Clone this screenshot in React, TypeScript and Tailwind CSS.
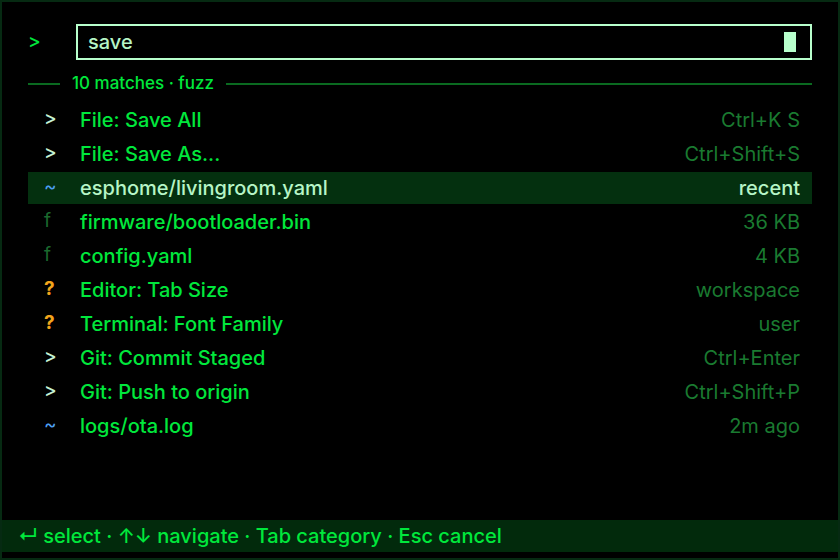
type Kind = "cmd" | "file" | "recent" | "setting";

type Item = {
  kind: Kind;
  label: string;
  hint: string;
  active?: boolean;
};

const items: Item[] = [
  { kind: "cmd", label: "File: Save All", hint: "Ctrl+K S" },
  { kind: "cmd", label: "File: Save As...", hint: "Ctrl+Shift+S" },
  { kind: "recent", label: "esphome/livingroom.yaml", hint: "recent", active: true },
  { kind: "file", label: "firmware/bootloader.bin", hint: "36 KB" },
  { kind: "file", label: "config.yaml", hint: "4 KB" },
  { kind: "setting", label: "Editor: Tab Size", hint: "workspace" },
  { kind: "setting", label: "Terminal: Font Family", hint: "user" },
  { kind: "cmd", label: "Git: Commit Staged", hint: "Ctrl+Enter" },
  { kind: "cmd", label: "Git: Push to origin", hint: "Ctrl+Shift+P" },
  { kind: "recent", label: "logs/ota.log", hint: "2m ago" },
];

function KindGlyph({ kind }: { kind: Kind }) {
  if (kind === "cmd") return <span className="text-[#c6f2d4]">&gt;</span>;
  if (kind === "file") return <span className="font-normal text-[#1b6a2e]">f</span>;
  if (kind === "recent") return <span className="font-normal text-[#4d9ff0]">~</span>;
  return <span className="font-bold text-[#f2a51c]">?</span>;
}

function Row({ item }: { item: Item }) {
  return (
    <div
      className={`flex h-[32px] items-center pl-[16px] pr-3 ${
        item.active ? "bg-[#04300f]" : ""
      }`}
    >
      <div className="w-[36px] shrink-0 text-[19px]">
        <KindGlyph kind={item.kind} />
      </div>
      <div className={`min-w-0 flex-1 ${item.active ? "text-[#b6f5c6]" : "text-[#00e83c]"}`}>
        {item.label}
      </div>
      <div className={item.active ? "text-[#b6f5c6]" : "font-normal text-[#1a7a30]"}>
        {item.hint}
      </div>
    </div>
  );
}

export default function App() {
  return (
    <div
      className="flex h-[560px] w-[840px] flex-col border-2 border-[#062a12] bg-black pb-[6px] text-[20px] font-medium leading-normal"
      style={{ fontFamily: "Inter, 'Noto Sans', sans-serif" }}
    >
      <div className="flex items-center px-[26px] pt-[22px]">
        <div className="w-[48px] shrink-0 text-[19px] text-[#00e83c]">&gt;</div>
        <div className="flex h-[36px] flex-1 items-center justify-between border-2 border-[#b8ffcc] pl-[10px] pr-[14px]">
          <span className="text-[#b6f5c6]">save</span>
          <span className="h-[20px] w-[12px] bg-[#b8ffcc]" />
        </div>
      </div>

      <div className="mt-[11px] flex items-center px-[26px]">
        <div className="h-[2px] w-[32px] bg-[#0a6a20]" />
        <span className="px-[12px] text-[17px] text-[#00e83c]">10 matches · fuzz</span>
        <div className="h-[2px] flex-1 bg-[#0a6a20]" />
      </div>

      <div className="mt-[7px] flex flex-col gap-[2px] px-[26px]">
        {items.map((item) => (
          <Row key={item.label} item={item} />
        ))}
      </div>

      <div className="mt-auto flex h-[32px] items-center bg-[#022a0c] pl-4 text-[#00e83c]">
        ↵ select · ↑↓ navigate · Tab category · Esc cancel
      </div>
    </div>
  );
}
